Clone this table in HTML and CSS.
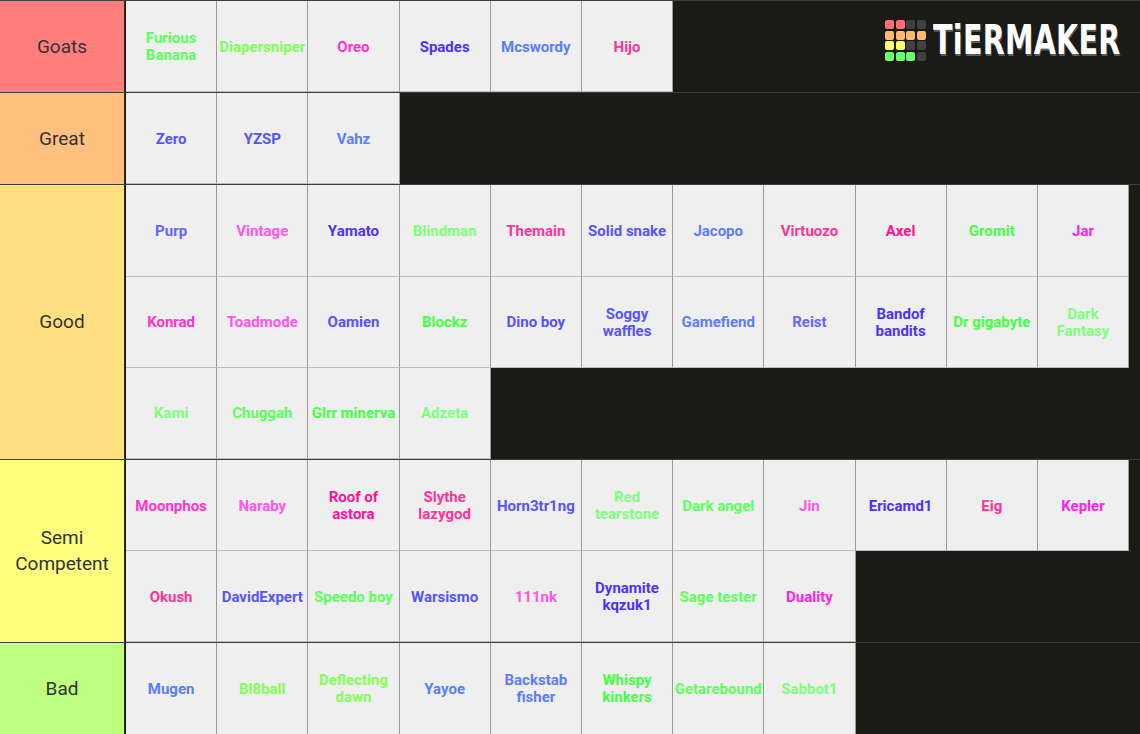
FILE: index.html
```html
<!DOCTYPE html>
<html lang="en">
<head>
<meta charset="utf-8">
<title>Tier list</title>
<link rel="stylesheet" href="styles.css">
</head>
<body>
<div class="board">
  <div class="logo">
    <div class="logo-grid">
      <span class="sq red"></span><span class="sq red"></span><span class="sq off"></span><span class="sq off"></span>
      <span class="sq orange"></span><span class="sq orange"></span><span class="sq orange"></span><span class="sq orange"></span>
      <span class="sq yellow"></span><span class="sq yellow"></span><span class="sq off"></span><span class="sq off"></span>
      <span class="sq green"></span><span class="sq green"></span><span class="sq green"></span><span class="sq off"></span>
    </div>
    <span class="logo-text">TiERMAKER</span>
  </div>

  <div class="tier">
    <div class="label t-s">Goats</div>
    <div class="items">
      <div class="item g1">Furious Banana</div>
      <div class="item g4">Diapersniper</div>
      <div class="item p1">Oreo</div>
      <div class="item b3">Spades</div>
      <div class="item b2">Mcswordy</div>
      <div class="item p2">Hijo</div>
    </div>
  </div>

  <div class="tier">
    <div class="label t-a">Great</div>
    <div class="items">
      <div class="item b1">Zero</div>
      <div class="item b1">YZSP</div>
      <div class="item b2">Vahz</div>
    </div>
  </div>

  <div class="tier">
    <div class="label t-b">Good</div>
    <div class="items">
      <div class="item b4">Purp</div>
      <div class="item p3">Vintage</div>
      <div class="item b3">Yamato</div>
      <div class="item g2">Blindman</div>
      <div class="item p2">Themain</div>
      <div class="item b1">Solid snake</div>
      <div class="item b2">Jacopo</div>
      <div class="item p2">Virtuozo</div>
      <div class="item p4">Axel</div>
      <div class="item g3">Gromit</div>
      <div class="item p5">Jar</div>
      <div class="item p1">Konrad</div>
      <div class="item p3">Toadmode</div>
      <div class="item b1">Oamien</div>
      <div class="item g3">Blockz</div>
      <div class="item b1">Dino boy</div>
      <div class="item b1">Soggy waffles</div>
      <div class="item b2">Gamefiend</div>
      <div class="item b4">Reist</div>
      <div class="item b3">Bandof bandits</div>
      <div class="item g3">Dr gigabyte</div>
      <div class="item g2">Dark<br>Fantasy</div>
      <div class="item g2">Kami</div>
      <div class="item g1">Chuggah</div>
      <div class="item g3">Glrr minerva</div>
      <div class="item g2">Adzeta</div>
    </div>
  </div>

  <div class="tier">
    <div class="label t-c">Semi<br>Competent</div>
    <div class="items">
      <div class="item p1">Moonphos</div>
      <div class="item p3">Naraby</div>
      <div class="item p4">Roof of astora</div>
      <div class="item p2">Slythe lazygod</div>
      <div class="item b1">Horn3tr1ng</div>
      <div class="item g2">Red tearstone</div>
      <div class="item g1">Dark angel</div>
      <div class="item p3">Jin</div>
      <div class="item b3">Ericamd1</div>
      <div class="item p2">Eig</div>
      <div class="item p5">Kepler</div>
      <div class="item p2">Okush</div>
      <div class="item b1">DavidExpert</div>
      <div class="item g1">Speedo boy</div>
      <div class="item b1">Warsismo</div>
      <div class="item p3">111nk</div>
      <div class="item b3">Dynamite kqzuk1</div>
      <div class="item g1">Sage tester</div>
      <div class="item p5">Duality</div>
    </div>
  </div>

  <div class="tier">
    <div class="label t-d">Bad</div>
    <div class="items">
      <div class="item b2">Mugen</div>
      <div class="item g4">Bl8ball</div>
      <div class="item g4">Deflecting dawn</div>
      <div class="item b2">Yayoe</div>
      <div class="item b2">Backstab fisher</div>
      <div class="item g3">Whispy kinkers</div>
      <div class="item g1">Getarebound</div>
      <div class="item g2">Sabbot1</div>
    </div>
  </div>
</div>
</body>
</html>
```

FILE: styles.css
```css
html, body {
  margin: 0;
  padding: 0;
  background: #1a1a17;
}

.board {
  position: relative;
  width: 1140px;
  height: 734px;
  overflow: hidden;
  background: #1a1a17;
  font-family: Roboto, "Liberation Sans", sans-serif;
}

.tier {
  display: flex;
  border-top: 1px solid #3d3d3a;
}

.label {
  flex: 0 0 125px;
  box-sizing: border-box;
  width: 125px;
  border-right: 1px solid #2a2a27;
  display: flex;
  align-items: center;
  justify-content: center;
  text-align: center;
  font-size: 19px;
  line-height: 26px;
  color: #333333;
}

.t-s { background: #ff7f7f; }
.t-a { background: #ffbf7f; }
.t-b { background: #ffdf7f; }
.t-c { background: #ffff7f; }
.t-d { background: #bfff7f; }

.items {
  display: flex;
  flex-wrap: wrap;
  align-content: flex-start;
  width: 1004px;
  margin-left: 1px;
}

.item {
  box-sizing: border-box;
  width: 91.2px;
  height: 91.2px;
  background: #efefef;
  border-right: 1px solid #9a9a9a;
  border-bottom: 1px solid #bdbdbd;
  display: flex;
  align-items: center;
  justify-content: center;
  text-align: center;
  font-size: 15px;
  font-weight: 700;
  line-height: 17px;
  overflow: hidden;
  padding: 2px 1px 0;
}

.g1 { color: #5cff5c; }
.g2 { color: #7dff7d; }
.g3 { color: #44ff44; }
.g4 { color: #80ff55; }
.b1 { color: #5555ff; }
.b2 { color: #5b7dff; }
.b3 { color: #4a33ff; }
.b4 { color: #6666ff; }
.p1 { color: #ff33cc; }
.p2 { color: #ff3399; }
.p3 { color: #ff55ee; }
.p4 { color: #ff1199; }
.p5 { color: #ff22ee; }

.logo {
  position: absolute;
  top: 20px;
  left: 885px;
  display: flex;
  align-items: center;
  gap: 7px;
}

.logo-grid {
  display: grid;
  grid-template-columns: repeat(4, 9px);
  grid-auto-rows: 9px;
  gap: 1.6px;
}

.sq {
  border-radius: 2px;
  display: block;
}

.red { background: #ff6f6f; }
.orange { background: #ffb872; }
.yellow { background: #ffff6a; }
.green { background: #6cff6c; }
.off { background: #414141; }

.logo-text {
  display: inline-block;
  font-family: "DejaVu Sans", sans-serif;
  font-weight: 700;
  font-size: 41px;
  line-height: 41px;
  color: #ffffff;
  transform: scaleX(0.695);
  transform-origin: left center;
  text-shadow: 1px 2px 0 #5a5a5a;
  letter-spacing: 0.5px;
}
```
